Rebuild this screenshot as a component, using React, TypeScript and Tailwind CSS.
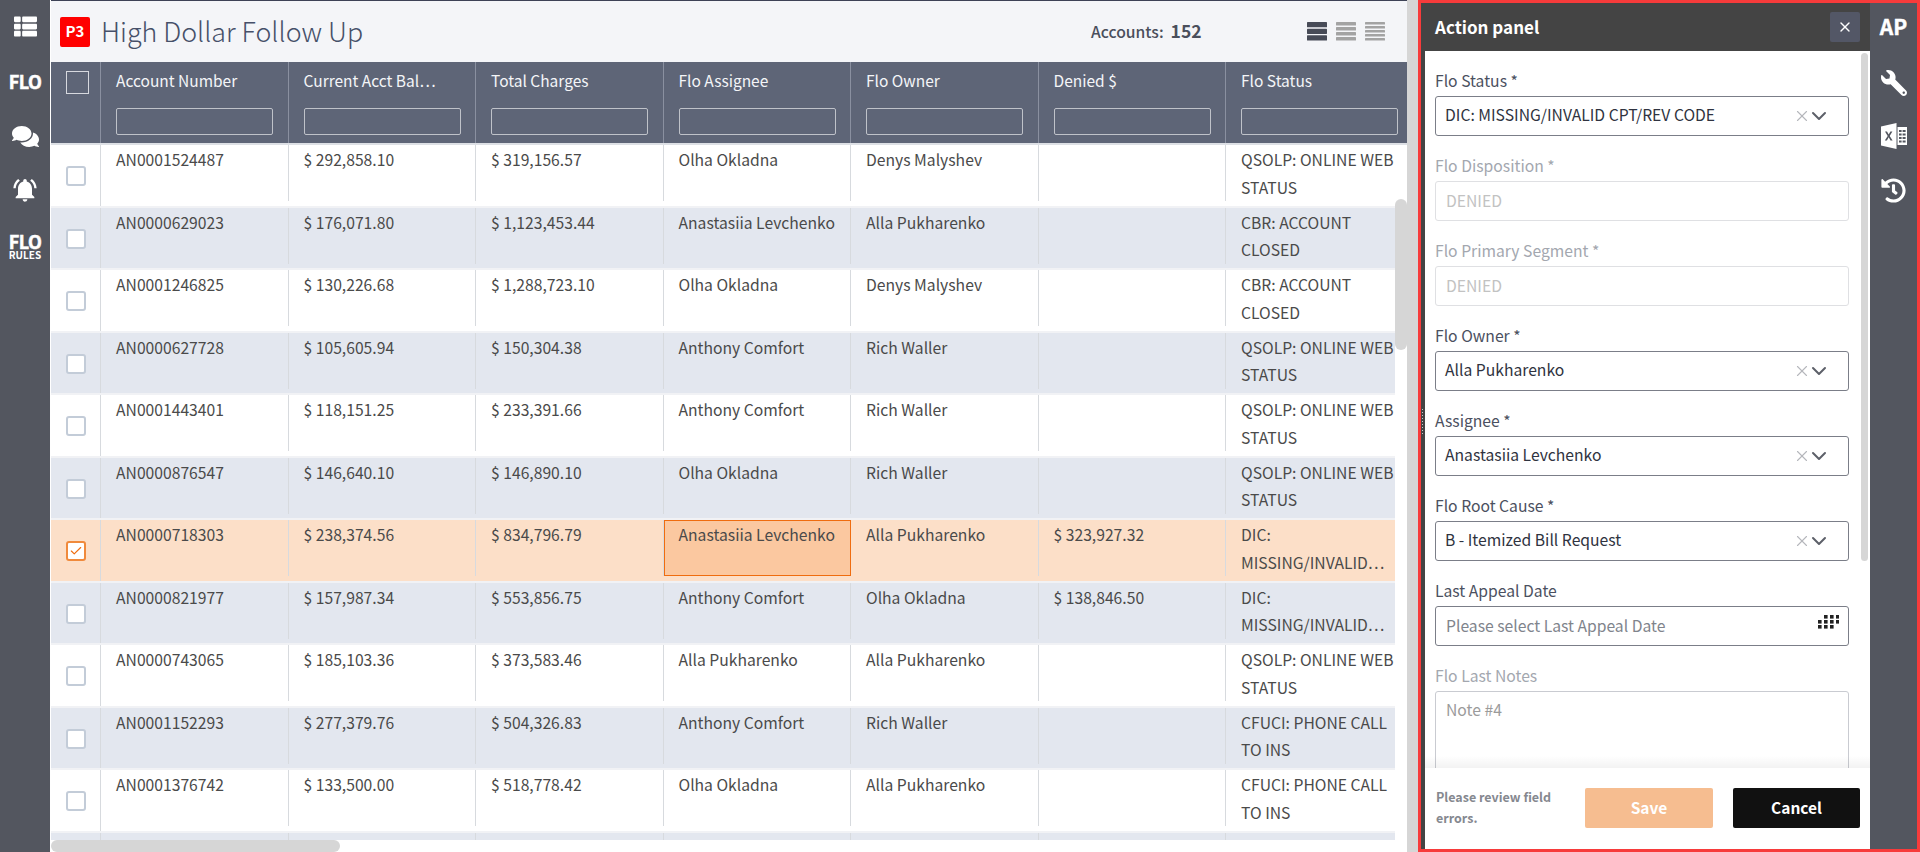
import { Check, ChevronDown, X } from "lucide-react";
import { FaComments, FaHistory, FaThList, FaWrench } from "react-icons/fa";
import { MdNotificationsActive } from "react-icons/md";

type Row = {
  account: string;
  balance: string;
  charges: string;
  assignee: string;
  owner: string;
  denied: string;
  status: string[];
};

const web = ["QSOLP: ONLINE WEB", "STATUS"];
const closed = ["CBR: ACCOUNT", "CLOSED"];
const invalid = ["DIC:", "MISSING/INVALID…"];
const phone = ["CFUCI: PHONE CALL", "TO INS"];

const rows: Row[] = [
  { account: "AN0001524487", balance: "$ 292,858.10", charges: "$ 319,156.57", assignee: "Olha Okladna", owner: "Denys Malyshev", denied: "", status: web },
  { account: "AN0000629023", balance: "$ 176,071.80", charges: "$ 1,123,453.44", assignee: "Anastasiia Levchenko", owner: "Alla Pukharenko", denied: "", status: closed },
  { account: "AN0001246825", balance: "$ 130,226.68", charges: "$ 1,288,723.10", assignee: "Olha Okladna", owner: "Denys Malyshev", denied: "", status: closed },
  { account: "AN0000627728", balance: "$ 105,605.94", charges: "$ 150,304.38", assignee: "Anthony Comfort", owner: "Rich Waller", denied: "", status: web },
  { account: "AN0001443401", balance: "$ 118,151.25", charges: "$ 233,391.66", assignee: "Anthony Comfort", owner: "Rich Waller", denied: "", status: web },
  { account: "AN0000876547", balance: "$ 146,640.10", charges: "$ 146,890.10", assignee: "Olha Okladna", owner: "Rich Waller", denied: "", status: web },
  { account: "AN0000718303", balance: "$ 238,374.56", charges: "$ 834,796.79", assignee: "Anastasiia Levchenko", owner: "Alla Pukharenko", denied: "$ 323,927.32", status: invalid },
  { account: "AN0000821977", balance: "$ 157,987.34", charges: "$ 553,856.75", assignee: "Anthony Comfort", owner: "Olha Okladna", denied: "$ 138,846.50", status: invalid },
  { account: "AN0000743065", balance: "$ 185,103.36", charges: "$ 373,583.46", assignee: "Alla Pukharenko", owner: "Alla Pukharenko", denied: "", status: web },
  { account: "AN0001152293", balance: "$ 277,379.76", charges: "$ 504,326.83", assignee: "Anthony Comfort", owner: "Rich Waller", denied: "", status: phone },
  { account: "AN0001376742", balance: "$ 133,500.00", charges: "$ 518,778.42", assignee: "Olha Okladna", owner: "Alla Pukharenko", denied: "", status: phone },
];

const headers = ["Account Number", "Current Acct Bal…", "Total Charges", "Flo Assignee", "Flo Owner", "Denied $", "Flo Status"];

function Cell({ children, selected }: { children?: React.ReactNode; selected?: boolean }) {
  return (
    <div className={selected ? "h-[56px] w-[187.5px] shrink-0 border border-[#ef6c0f] bg-[#fbc8a0] pl-[14px]" : "h-[56px] w-[187.5px] shrink-0 border-r border-[#d7dade] pl-[15px] pt-px"}>
      {children}
    </div>
  );
}

function TableRow({ row, index }: { row: Row; index: number }) {
  const active = index === 6;
  const bg = active ? "bg-[#fcdfc8]" : index % 2 === 1 ? "bg-[#e3e7ef]" : "bg-white";
  return (
    <div className={`flex h-[62.5px] shrink-0 border-b-2 border-[#f1f2f5] text-[15.7px] leading-[27.5px] text-[#4a4a4a] ${bg}`}>
      <div className="flex h-full w-[50px] shrink-0 items-center border-r border-[#d7dade] pl-[15px] pt-0.5">
        {active ? (
          <span className="grid size-5 place-items-center rounded-[3px] border-2 border-[#f08a3c] bg-white text-[#ef6c0f]">
            <Check size={14} strokeWidth={2} />
          </span>
        ) : (
          <span className="size-5 rounded-[3px] border-2 border-[#c3ccd8] bg-white" />
        )}
      </div>
      <Cell>{row.account}</Cell>
      <Cell>{row.balance}</Cell>
      <Cell>{row.charges}</Cell>
      <Cell selected={active}>{row.assignee}</Cell>
      <Cell>{row.owner}</Cell>
      <Cell>{row.denied}</Cell>
      <div className="w-[169px] shrink-0 overflow-hidden whitespace-nowrap pl-[15px] pt-px">
        {row.status.map((line) => (
          <div key={line}>{line}</div>
        ))}
      </div>
    </div>
  );
}

function DensityIcon({ lines, color }: { lines: number; color: string }) {
  const h = 20 / lines;
  return (
    <svg width="20" height="20" viewBox="0 0 20 20" fill={color}>
      {Array.from({ length: lines }).map((_, i) => (
        <rect key={i} x="0" y={i * h} width="20" height={h - 1.4} rx="0.6" />
      ))}
    </svg>
  );
}

function Field({ label, value, disabled, placeholder }: { label: string; value?: string; disabled?: boolean; placeholder?: string }) {
  const active = value && !disabled;
  return (
    <div className="mb-[19px] w-[414px]">
      <div className={`mb-1 h-[22px] text-[15.7px] leading-[22px] ${disabled ? "text-[#a3a7af]" : "text-[#4b5060]"}`}>{label}</div>
      <div className={`flex h-10 items-center rounded-[3px] border pr-[21px] text-[15.7px] ${active ? "pb-0.5 pl-[9px]" : "pl-[10px]"} ${disabled ? "border-[#dfe0e3] text-[#c2c2c2]" : "border-[#7b7e88] text-[#2f3340]"}`}>
        <span className={placeholder ? "flex-1 text-[#80848c]" : "flex-1"}>{placeholder ?? value}</span>
        {active && <X size={18} strokeWidth={1.5} className="-mr-1 mt-0.5 text-[#b5b7bc]" />}
        {active && <ChevronDown size={24} strokeWidth={2} className="-mr-[4px] mt-0.5 text-[#5d6069]" />}
      </div>
    </div>
  );
}

function CalendarDots() {
  const dots = [[6, 0], [12, 0], [18, 0], [0, 5], [6, 5], [12, 5], [18, 5], [0, 10], [6, 10], [12, 10]];
  return (
    <svg width="21" height="14" viewBox="0 0 21 14" fill="#222">
      {dots.map(([x, y]) => (
        <rect key={`${x}-${y}`} x={x} y={y} width="3.6" height="3.6" />
      ))}
    </svg>
  );
}

function ExcelIcon() {
  return (
    <svg width="26" height="26" viewBox="0 0 26 26" className="mt-[27px]">
      <path d="M0 3.5 15.5 0v26L0 22.5z" fill="#fff" />
      <path d="m4 8.5 2 0 1.7 3 1.7-3 2 0-2.7 4.4 2.9 4.6-2.1 0-1.8-3.2-1.8 3.2-2.1 0 2.9-4.6z" fill="#53565f" />
      <path d="M16.5 4H26v18h-9.5z" fill="#fff" />
      <path d="M18 7h2.6v2H18zM21.6 7h3v2h-3zM18 10.5h2.6v2H18zM21.6 10.5h3v2h-3zM18 14h2.6v2H18zM21.6 14h3v2h-3zM18 17.5h2.6v2H18zM21.6 17.5h3v2h-3z" fill="#53565f" />
    </svg>
  );
}

export default function App() {
  return (
    <div className="flex h-[852px] w-[1920px] overflow-hidden bg-white font-['Noto_Sans_CJK_SC','Source_Sans_Pro',sans-serif]">
      <aside className="flex w-[50px] shrink-0 flex-col items-center bg-[#53565f] text-white">
        <FaThList size={23} className="mt-[15px]" />
        <div className="mt-[31px] h-[24px] text-[18px] font-bold leading-[24px] tracking-[-0.5px] [-webkit-text-stroke:0.5px_#fff]">FLO</div>
        <FaComments size={27} className="mt-[30px]" />
        <MdNotificationsActive size={28} className="mt-[26px]" />
        <div className="mt-[28px] h-[18px] text-[18px] font-bold leading-[18px] tracking-[-0.5px] [-webkit-text-stroke:0.5px_#fff]">FLO</div>
        <div className="text-[10px] font-bold leading-[10px]">RULES</div>
      </aside>

      <main className="relative ml-px flex w-[1356px] shrink-0 flex-col overflow-hidden">
        <header className="flex h-[62px] shrink-0 items-center border-t border-[#3d4256] bg-[#f4f5f8] pl-[9px]">
          <span className="grid size-[30px] place-items-center rounded-[2px] bg-[#ff0000] text-[15px] font-bold text-white">P3</span>
          <h1 className="ml-[11px] w-[990px] text-[26.8px] font-light text-[#465069]">High Dollar Follow Up</h1>
          <span className="text-[15.7px] font-medium text-[#4a4f5c]">Accounts:</span>
          <span className="ml-[7px] text-[17.5px] font-bold text-[#4a4f5c]">152</span>
          <div className="ml-[105px] flex gap-[9px]">
            <DensityIcon lines={3} color="#474b57" />
            <DensityIcon lines={4} color="#a3a3a3" />
            <DensityIcon lines={5} color="#a3a3a3" />
          </div>
        </header>

        <div className="flex h-[83px] shrink-0 border-b-2 border-[#dde0e5] bg-[#5e6577] text-[15.5px] text-[#f4f5f8]">
          <div className="w-[50px] shrink-0 border-r border-[#8a90a0] pl-[15px] pt-[9px]">
            <div className="size-[23px] border border-[#d7d9df]" />
          </div>
          {headers.map((title) => (
            <div key={title} className="w-[187.5px] shrink-0 border-r border-[#8a90a0] pl-[15px] last:border-r-0">
              <div className="mt-[6px] h-[24px] leading-[24px]">{title}</div>
              <div className="mt-[16px] h-[27px] w-[157px] rounded-[2px] border border-[#bfc2c9]" />
            </div>
          ))}
        </div>

        <div className="flex h-[696px] w-[1344px] flex-col overflow-hidden">
          {rows.map((row, index) => (
            <TableRow key={row.account} row={row} index={index} />
          ))}
          <div className="flex h-[20px] shrink-0 bg-[#e3e7ef]">
            <div className="w-[50px] shrink-0 border-r border-[#d7dade]" />
            {headers.slice(0, 6).map((title) => (
              <div key={title} className="w-[187.5px] shrink-0 border-r border-[#d7dade]" />
            ))}
          </div>
        </div>

        <div className="absolute right-0 top-[199px] h-[151px] w-3 rounded-md bg-[#d6d6d6]" />
        <div className="absolute bottom-0 left-0 h-3 w-[1356px] bg-white">
          <div className="h-3 w-[289px] rounded-md bg-[#d6d6d6]" />
        </div>
      </main>

      <div className="w-[11px] shrink-0 bg-[#d6d6d6]" />

      <section className="relative flex h-[852px] w-[502px] shrink-0 border-[3px] border-[#f73b3b]">
        <div className="flex w-[449px] shrink-0 flex-col border-l-4 border-[#444444]">
          <div className="flex h-[48px] shrink-0 items-center justify-between bg-[#444444] pl-[10px] pr-[10px]">
            <span className="text-[17px] font-bold text-white">Action panel</span>
            <button className="grid h-[30px] w-[30px] place-items-center rounded-[2px] bg-[#535766] text-white">
              <X size={16} strokeWidth={2} />
            </button>
          </div>
          <div className="relative flex-1 overflow-hidden bg-white pl-[10px] pt-[19px]">
            <Field label="Flo Status *" value="DIC: MISSING/INVALID CPT/REV CODE" />
            <Field label="Flo Disposition *" value="DENIED" disabled />
            <Field label="Flo Primary Segment *" value="DENIED" disabled />
            <Field label="Flo Owner *" value="Alla Pukharenko" />
            <Field label="Assignee *" value="Anastasiia Levchenko" />
            <Field label="Flo Root Cause *" value="B - Itemized Bill Request" />
            <div className="relative">
              <Field label="Last Appeal Date" placeholder="Please select Last Appeal Date" />
              <span className="absolute left-[383px] top-[35px]">
                <CalendarDots />
              </span>
            </div>
            <div className="w-[414px]">
              <div className="mb-1 h-[22px] text-[15.7px] leading-[22px] text-[#a3a7af]">Flo Last Notes</div>
              <div className="h-[120px] rounded-[3px] border border-[#c9cbd1] pl-[10px] pt-[6px] text-[15.7px] text-[#9b9b9b]">Note #4</div>
            </div>
            <div className="absolute right-[2px] top-[2px] h-[508px] w-[7px] rounded bg-[#d6d6d6]" />
            <div className="absolute bottom-0 left-0 h-3 w-full bg-gradient-to-t from-black/5 to-transparent" />
          </div>
          <div className="flex h-[81px] shrink-0 items-start bg-white pl-[11px] pt-[20px]">
            <p className="mt-[-2px] w-[149px] text-[12.5px] font-bold leading-[21px] text-[#85888f]">Please review field errors.</p>
            <button className="h-10 w-[128px] rounded-[2px] bg-[#f6bd90] text-[15.5px] font-bold text-white">Save</button>
            <button className="ml-5 h-10 w-[127px] rounded-[2px] bg-[#111111] text-[15.5px] font-bold text-white">Cancel</button>
          </div>
        </div>
        <aside className="flex w-[47px] shrink-0 flex-col items-center bg-[#53565f] text-white">
          <div className="mt-[9px] h-[28px] text-[21px] font-bold leading-[28px] [-webkit-text-stroke:0.4px_#fff]">AP</div>
          <FaWrench size={26} className="mt-[30px] -scale-x-100" />
          <ExcelIcon />
          <FaHistory size={25} className="mt-[29px]" />
        </aside>
        <div className="absolute left-0 top-[405px] h-[26px] w-[4px] bg-[radial-gradient(circle,#c9c9c9_1px,transparent_1px)] bg-[length:3px_3px]" />
      </section>
    </div>
  );
}
